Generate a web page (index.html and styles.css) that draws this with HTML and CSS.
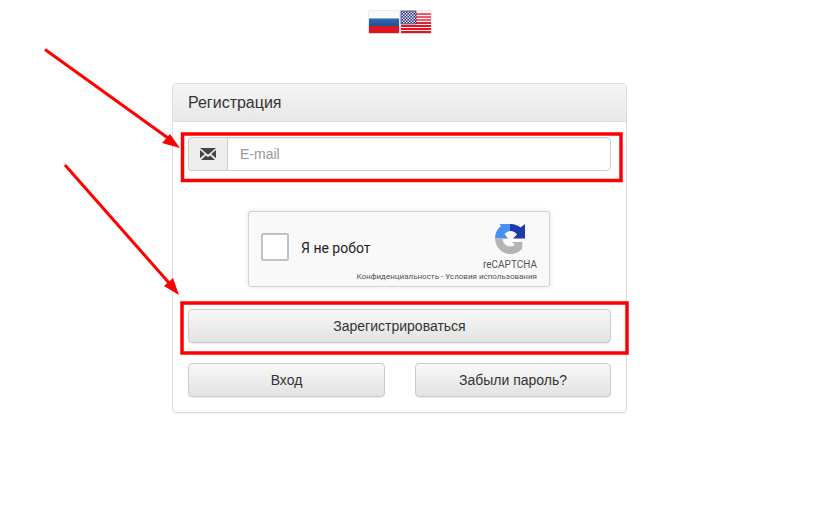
FILE: index.html
```html
<!DOCTYPE html>
<html lang="ru">
<head>
  <meta charset="UTF-8">
  <meta name="viewport" content="width=device-width, initial-scale=1.0">
  <title>Регистрация</title>
  <link rel="stylesheet" href="styles.css">
</head>
<body>
  <div class="langs">
    <!-- flag icons -->
    <svg class="flag" width="32" height="24" viewBox="0 0 32 24">
      <defs>
        <linearGradient id="ruBlue" x1="0" y1="0" x2="0" y2="1">
          <stop offset="0" stop-color="#2f6db5"/>
          <stop offset="1" stop-color="#1c4f9c"/>
        </linearGradient>
        <pattern id="stars" width="3" height="3" patternUnits="userSpaceOnUse">
          <rect width="3" height="3" fill="#2a2f80"/>
          <rect width="1.5" height="1.5" fill="#e8e8f4"/>
          <rect x="1.5" y="1.5" width="1.5" height="1.5" fill="#e8e8f4"/>
        </pattern>
      </defs>
      <rect x="0.5" y="0.5" width="31" height="23.5" fill="#d6d6d6"/>
      <rect x="1" y="1" width="30" height="7.500" fill="#fafafa"/>
      <rect x="1" y="8.500" width="30" height="7.500" fill="url(#ruBlue)"/>
      <rect x="1" y="16" width="30" height="7" fill="#e0141c"/>
    </svg>
    <svg class="flag" width="32" height="24" viewBox="0 0 32 24">
      <rect x="0.5" y="0.5" width="31" height="23.5" fill="#d6d6d6"/>
      <rect x="1" y="1" width="30" height="22" fill="#fbeef0"/>
      <rect x="1" y="3" width="30" height="2" fill="#e8606c"/>
      <rect x="1" y="6" width="30" height="2" fill="#e8606c"/>
      <rect x="1" y="9" width="30" height="2" fill="#e8606c"/>
      <rect x="1" y="12" width="30" height="2" fill="#e0222e"/>
      <rect x="1" y="15" width="30" height="2" fill="#e0141c"/>
      <rect x="1" y="18" width="30" height="2" fill="#e0141c"/>
      <rect x="1" y="21" width="30" height="2" fill="#e0141c"/>
      <rect x="1" y="1" width="15" height="13" fill="url(#stars)" stroke="#23276e" stroke-width="0.6"/>
    </svg>
  </div>

  <div class="panel">
    <div class="panel-heading">Регистрация</div>
    <div class="panel-body">
      <div class="input-group">
        <span class="input-addon">
          <svg width="16" height="12" viewBox="0 0 16 12">
            <path d="M0 0H16L8 6.800Z" fill="#444"/>
            <path d="M0 2V10.200L4.800 5.900Z" fill="#444"/>
            <path d="M16 2V10.200L11.200 5.900Z" fill="#444"/>
            <path d="M1 12L5.800 7.500L8 9L10.200 7.500L15 12Z" fill="#444"/>
          </svg>
        </span>
        <input class="form-control" type="text" placeholder="E-mail">
      </div>

      <div class="captcha">
        <span class="captcha-box"></span>
        <span class="captcha-label">Я не робот</span>
        <div class="captcha-brand">
          <svg class="captcha-logo" width="32" height="32" viewBox="0 0 32 32">
            <path d="M0 15.500A15.500 15.500 0 0 1 6 3L4.500 1H15V8A8 8 0 0 0 9.500 11L13 15.500Z" fill="#4a90f0"/>
            <path d="M15 1A15 15 0 0 1 25.500 4.500L30 1V15.500H18L22 11.500A8 8 0 0 0 15 8Z" fill="#1c3aa9"/>
            <path d="M0 15.500H7.500A8 8 0 0 0 15.500 23.500A8 8 0 0 0 20 22L17 19L27.500 19L27 26A15.500 15.500 0 0 1 0 15.500Z" fill="#b4b4b4"/>
          </svg>
          <span class="captcha-name">reCAPTCHA</span>
        </div>
        <div class="captcha-links">Конфиденциальность - Условия использования</div>
      </div>

      <button class="btn btn-wide" type="button">Зарегистрироваться</button>
      <div class="btn-row">
        <button class="btn" type="button">Вход</button>
        <button class="btn" type="button">Забыли пароль?</button>
      </div>
    </div>
  </div>

  <!-- red marks drawn over the page -->
  <svg class="marks" width="820" height="519" viewBox="0 0 820 519">
    <rect x="182.500" y="134" width="438.500" height="46.500" fill="none" stroke="#fe0000" stroke-width="3.500"/>
    <rect x="182" y="303" width="445" height="50" fill="none" stroke="#fe0000" stroke-width="3.500"/>
    <path d="M45 49.500L168 138" stroke="#fe0000" stroke-width="3" fill="none"/>
    <path d="M180 148L162 143L170 134Z" fill="#fe0000"/>
    <path d="M65 165L170 284" stroke="#fe0000" stroke-width="3" fill="none"/>
    <path d="M179 295L164 286L173 278Z" fill="#fe0000"/>
  </svg>
</body>
</html>
```
FILE: styles.css
```css
body {
  margin: 0;
  height: 519px;
  overflow: hidden;
  background: #fff;
  font-family: "Liberation Sans", Arial, sans-serif;
  font-size: 14px;
  color: #333;
}
.langs {
  display: flex;
  justify-content: center;
  width: 800px;
  height: 83px;
  padding-top: 10px;
  box-sizing: border-box;
}
.flag {
  display: block;
}
.panel {
  width: 455px;
  height: 330px;
  margin-left: 172px;
  box-sizing: border-box;
  border: 1px solid #ddd;
  border-radius: 4px;
  box-shadow: 0 1px 1px rgba(0, 0, 0, .05);
}
.panel-heading {
  height: 38px;
  box-sizing: border-box;
  padding: 10px 15px;
  font-size: 16px;
  line-height: 18px;
  color: #333;
  background: linear-gradient(to bottom, #f5f5f5, #e8e8e8);
  border-bottom: 1px solid #ddd;
  border-radius: 3px 3px 0 0;
}
.panel-body {
  padding: 15px;
}
.input-group {
  display: flex;
  height: 34px;
}
.input-addon {
  display: flex;
  align-items: center;
  justify-content: center;
  width: 39px;
  box-sizing: border-box;
  background: #eee;
  border: 1px solid #ccc;
  border-right: 0;
  border-radius: 4px 0 0 4px;
}
.form-control {
  flex: 1;
  min-width: 0;
  box-sizing: border-box;
  padding: 6px 12px;
  font-family: inherit;
  font-size: 14px;
  border: 1px solid #ccc;
  border-radius: 0 4px 4px 0;
  box-shadow: inset 0 1px 1px rgba(0, 0, 0, .075);
}
.form-control::placeholder {
  color: #999;
}
.captcha {
  position: relative;
  width: 302px;
  height: 76px;
  box-sizing: border-box;
  margin: 40px 0 22px 60px;
  background: #f9f9f9;
  border: 1px solid #d3d3d3;
  border-radius: 3px;
  box-shadow: 0 0 4px 1px rgba(0, 0, 0, .08);
  font-family: Roboto, "Liberation Sans", sans-serif;
}
.captcha-box {
  position: absolute;
  left: 12px;
  top: 21px;
  width: 28px;
  height: 28px;
  box-sizing: border-box;
  background: #fff;
  border: 2px solid #c1c1c1;
  border-radius: 2px;
}
.captcha-label {
  position: absolute;
  left: 52px;
  top: 28px;
  font-size: 14px;
  line-height: 17px;
  color: #222;
}
.captcha-brand {
  position: absolute;
  right: 12px;
  top: 11px;
  display: flex;
  flex-direction: column;
  align-items: center;
}
.captcha-logo {
  margin-left: 2px;
}
.captcha-name {
  margin-top: 4px;
  font-size: 10px;
  line-height: 12px;
  color: #555;
}
.captcha-links {
  position: absolute;
  right: 12px;
  top: 60px;
  font-size: 8px;
  line-height: 10px;
  color: #555;
  white-space: nowrap;
}
.btn {
  display: block;
  height: 34px;
  box-sizing: border-box;
  padding: 6px 12px;
  font-family: inherit;
  font-size: 14px;
  color: #333;
  background: linear-gradient(to bottom, #f8f8f8, #e2e2e2);
  border: 1px solid #ccc;
  border-radius: 4px;
  box-shadow: 0 1px 1px rgba(0, 0, 0, .08);
}
.btn-wide {
  width: 100%;
}
.btn-row {
  display: flex;
  justify-content: space-between;
  margin-top: 20px;
}
.btn-row .btn {
  width: 197px;
}
.btn-row .btn + .btn {
  width: 196px;
}
.marks {
  position: absolute;
  left: 0;
  top: 0;
  pointer-events: none;
}
```
